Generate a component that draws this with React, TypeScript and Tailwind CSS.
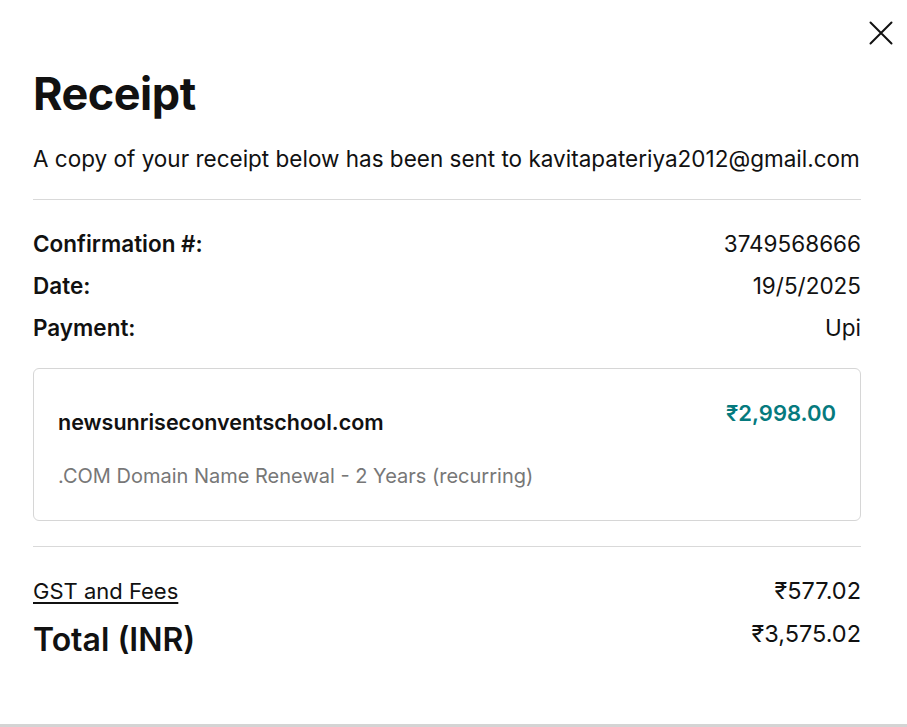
import React from 'react';

const font = { fontFamily: 'Inter, "Noto Sans", sans-serif' };

const Row: React.FC<{ label: string; value: string }> = ({ label, value }) => (
    <div className="flex justify-between items-center h-[42px]">
        <span className="font-semibold text-[22.5px]">{label}</span>
        <span className="text-[22.5px]">{value}</span>
    </div>
);

export default function App() {
    return (
        <div className="w-[907px] h-[727px] bg-white text-[#111] relative border-b-[3px] border-[#d4d4d4]" style={font}>
            <button className="absolute right-[13px] top-[20px] w-[26px] h-[26px] flex items-center justify-center">
                <svg width="24" height="24" viewBox="0 0 24 24" stroke="#111" strokeWidth="2" strokeLinecap="round">
                    <path d="M1.5 1.5 L22.5 22.5 M22.5 1.5 L1.5 22.5" />
                </svg>
            </button>
            <div className="px-[33px] pt-[68px] w-[894px]">
                <h1 className="text-[45px] font-bold leading-[52px] tracking-[-0.5px]">Receipt</h1>
                <p className="text-[22.5px] mt-[25px] leading-[28px] whitespace-nowrap">
                    A copy of your receipt below has been sent to kavitapateriya2012@gmail.com
                </p>
                <div className="border-t border-[#d9d9d9] mt-[26px]" />
                <div className="mt-[23px]">
                    <Row label="Confirmation #:" value="3749568666" />
                    <Row label="Date:" value="19/5/2025" />
                    <Row label="Payment:" value="Upi" />
                </div>
                <div className="mt-[19px] border border-[#d6d6d6] rounded-[6px] h-[153px] px-[24px] pt-[30px]">
                    <div className="flex justify-between items-start">
                        <span className="font-semibold text-[21.5px] leading-[28px] mt-[9px]">newsunriseconventschool.com</span>
                        <span className="font-semibold text-[22px] leading-[28px] text-[#057a7e]">₹2,998.00</span>
                    </div>
                    <p className="text-[20px] leading-[28px] text-[#777] mt-[26px]">.COM Domain Name Renewal - 2 Years (recurring)</p>
                </div>
                <div className="border-t border-[#d9d9d9] mt-[25px]" />
                <div className="flex justify-between items-center mt-[30px] h-[28px]">
                    <a className="text-[22px] leading-[28px] underline underline-offset-[3px] decoration-[1.5px]">GST and Fees</a>
                    <span className="text-[23.5px] leading-[28px]">₹577.02</span>
                </div>
                <div className="flex justify-between items-start mt-[15px]">
                    <span className="text-[32px] font-semibold leading-[40px]">Total (INR)</span>
                    <span className="text-[23.5px] leading-[28px]">₹3,575.02</span>
                </div>
            </div>
        </div>
    );
}
